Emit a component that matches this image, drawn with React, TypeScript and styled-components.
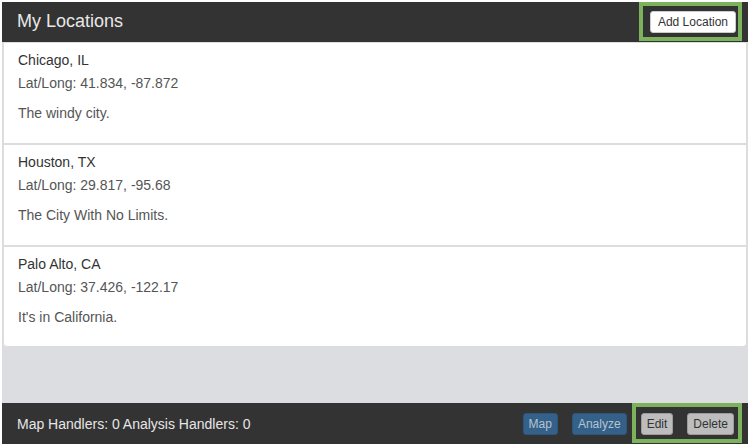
import React from "react";
import styled, { createGlobalStyle } from "styled-components";

const GlobalStyle = createGlobalStyle`
  html, body { margin: 0; padding: 0; background: #ffffff; }
  body { font-family: "Liberation Sans", Arial, Helvetica, sans-serif; font-size: 14px; color: #333; }
  * { box-sizing: border-box; }
`;

const Shell = styled.div`
  margin: 2px 3px 4px 2px;
  height: 442px;
  background: #dcdde0;
  display: flex;
  flex-direction: column;
`;

const Bar = styled.div<{ $h: number }>`
  height: ${(p) => p.$h}px;
  background: #333333;
  display: flex;
  align-items: stretch;
  justify-content: space-between;
  padding-left: 15px;
  padding-right: 6px;
  flex-shrink: 0;
`;

const Title = styled.div`
  font-size: 18px;
  color: #e8e8e8;
  display: flex;
  align-items: center;
  padding-bottom: 2px;
`;

const FooterText = styled.div`
  font-size: 14px;
  color: #e6e6e6;
  display: flex;
  align-items: center;
  padding-top: 1px;
`;

const Highlight = styled.div<{ $pad: string; $h: number }>`
  height: ${(p) => p.$h}px;
  border: 4px solid #7cb25b;
  display: flex;
  align-items: flex-start;
  gap: 14px;
  padding: ${(p) => p.$pad};
`;

const Button = styled.button<{ $variant: "light" | "muted" | "primary"; $px?: number }>`
  height: 22px;
  padding: 0 ${(p) => p.$px ?? 5}px;
  font-family: "Liberation Sans", Arial, sans-serif;
  font-size: 12px;
  line-height: 20px;
  border-radius: 3px;
  border: 1px solid
    ${(p) => (p.$variant === "light" ? "#cccccc" : p.$variant === "muted" ? "#9c9c9c" : "#2d5579")};
  background: ${(p) => (p.$variant === "light" ? "#ffffff" : p.$variant === "muted" ? "#bdbdbd" : "#33618a")};
  color: ${(p) => (p.$variant === "light" ? "#333333" : p.$variant === "muted" ? "#333333" : "#b7c3ce")};
  cursor: default;
`;

const RightGroup = styled.div`
  display: flex;
  align-items: flex-start;
  gap: 5px;
`;

const PlainButtons = styled.div`
  display: flex;
  align-items: flex-start;
  gap: 14px;
  padding-top: 10px;
`;

const List = styled.div`
  flex: 1;
  padding: 0 1px;
  display: flex;
  flex-direction: column;
`;

const Item = styled.div<{ $last?: boolean }>`
  background: #ffffff;
  border: 1px solid #dddddd;
  height: ${(p) => (p.$last ? 101 : 102)}px;
  padding: 9px 14px 10px 14px;
  border-radius: ${(p) => (p.$last ? "0 0 4px 4px" : "0")};
`;

const Heading = styled.div`
  font-size: 14px;
  line-height: 16px;
  color: #333333;
  margin-bottom: 5px;
`;

const Line = styled.div<{ $gap?: number }>`
  font-size: 14px;
  line-height: 20px;
  color: #555555;
  margin-top: ${(p) => p.$gap ?? 0}px;
`;

const locations = [
  { name: "Chicago, IL", coords: "41.834, -87.872", desc: "The windy city." },
  { name: "Houston, TX", coords: "29.817, -95.68", desc: "The City With No Limits." },
  { name: "Palo Alto, CA", coords: "37.426, -122.17", desc: "It's in California." },
];

export default function App() {
  return (
    <>
      <GlobalStyle />
      <Shell>
        <Bar $h={40}>
          <Title>My Locations</Title>
          <Highlight $pad="5px 2px 0 7px" $h={39}>
            <Button $variant="light" $px={7}>Add Location</Button>
          </Highlight>
        </Bar>
        <List>
          {locations.map((l, i) => (
            <Item key={l.name} $last={i === locations.length - 1}>
              <Heading>{l.name}</Heading>
              <Line>Lat/Long: {l.coords}</Line>
              <Line $gap={10}>{l.desc}</Line>
            </Item>
          ))}
        </List>
        <Bar $h={41}>
          <FooterText>Map Handlers: 0 Analysis Handlers: 0</FooterText>
          <RightGroup>
            <PlainButtons>
              <Button $variant="primary">Map</Button>
              <Button $variant="primary">Analyze</Button>
            </PlainButtons>
            <Highlight $pad="6px 4px 0 5px" $h={40}>
              <Button $variant="muted">Edit</Button>
              <Button $variant="muted">Delete</Button>
            </Highlight>
          </RightGroup>
        </Bar>
      </Shell>
    </>
  );
}
